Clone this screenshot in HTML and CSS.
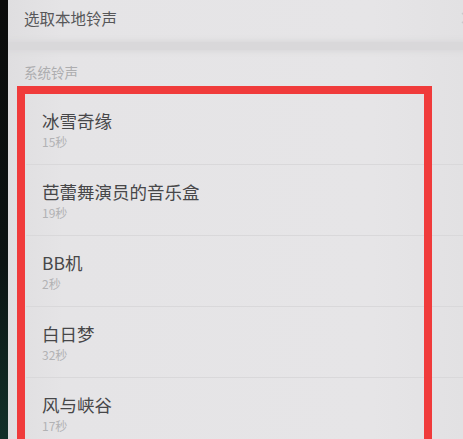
FILE: index.html
```html
<!DOCTYPE html>
<html>
	<head>
		<meta charset="UTF-8">
		<title>铃声</title>
		<link rel="stylesheet" href="styles.css">
	</head>
	<body>
		<div class="phone">
			<div class="bezel"></div>
			<div class="screen">
				<div class="pick_row">
					<span>选取本地铃声</span>
					<svg class="arrow" width="8" height="12" viewBox="0 0 8 12"><polyline points="1,1 6,6 1,11" fill="none" stroke="#cacacc" stroke-width="1.4"/></svg>
				</div>
				<div class="band"></div>
				<div class="section_title">系统铃声</div>
				<ul class="ring_list">
					<li><p class="name">冰雪奇缘</p><p class="len">15秒</p></li>
					<li><p class="name">芭蕾舞演员的音乐盒</p><p class="len">19秒</p></li>
					<li><p class="name">BB机</p><p class="len">2秒</p></li>
					<li><p class="name">白日梦</p><p class="len">32秒</p></li>
					<li><p class="name">风与峡谷</p><p class="len">17秒</p></li>
				</ul>
				<div class="mark"></div>
			</div>
		</div>
	</body>
</html>
```

FILE: styles.css
```css
* {
	margin: 0px;
	padding: 0px;
}
ul {
	list-style: none;
}
body {
	width: 463px;
	height: 439px;
	overflow: hidden;
	background: #e4e3e5;
	font-family: "Noto Sans CJK SC", "Noto Sans", sans-serif;
}
.phone {
	display: flex;
	height: 439px;
}
.bezel {
	width: 8px;
	background: linear-gradient(#0b0b0b, #0c1413 60%, #123029);
}
.screen {
	flex: 1;
	position: relative;
	overflow: hidden;
	background: linear-gradient(90deg, #dfdee0, #e5e4e6 12%, #e6e5e7 80%, #e2e1e3);
}
.pick_row {
	height: 42px;
	display: flex;
	align-items: center;
	justify-content: space-between;
	padding: 0 0 6px 16px;
	box-sizing: border-box;
	font-size: 15.5px;
	color: #575759;
}
.arrow {
	margin-right: -6px;
}
.band {
	height: 8px;
	background: #d9d8da;
	box-shadow: 0 0 5px 2px #dad9db;
}
.section_title {
	height: 44px;
	padding: 13px 0 0 16px;
	box-sizing: border-box;
	font-size: 13.5px;
	line-height: 18px;
	color: #adadaf;
}
.ring_list {
	padding-left: 18px;
}
.ring_list li {
	height: 71px;
	padding: 16px 0 0 16px;
	box-sizing: border-box;
	border-bottom: 1px solid #d9d8da;
}
.name {
	font-size: 17.5px;
	line-height: 22px;
	color: #474749;
}
.len {
	font-size: 12px;
	line-height: 16px;
	margin-top: 2px;
	color: #b2b2b4;
}
.mark {
	position: absolute;
	left: 9px;
	top: 86px;
	width: 415px;
	height: 400px;
	border: 8px solid #f03b3b;
	box-sizing: border-box;
}
```
